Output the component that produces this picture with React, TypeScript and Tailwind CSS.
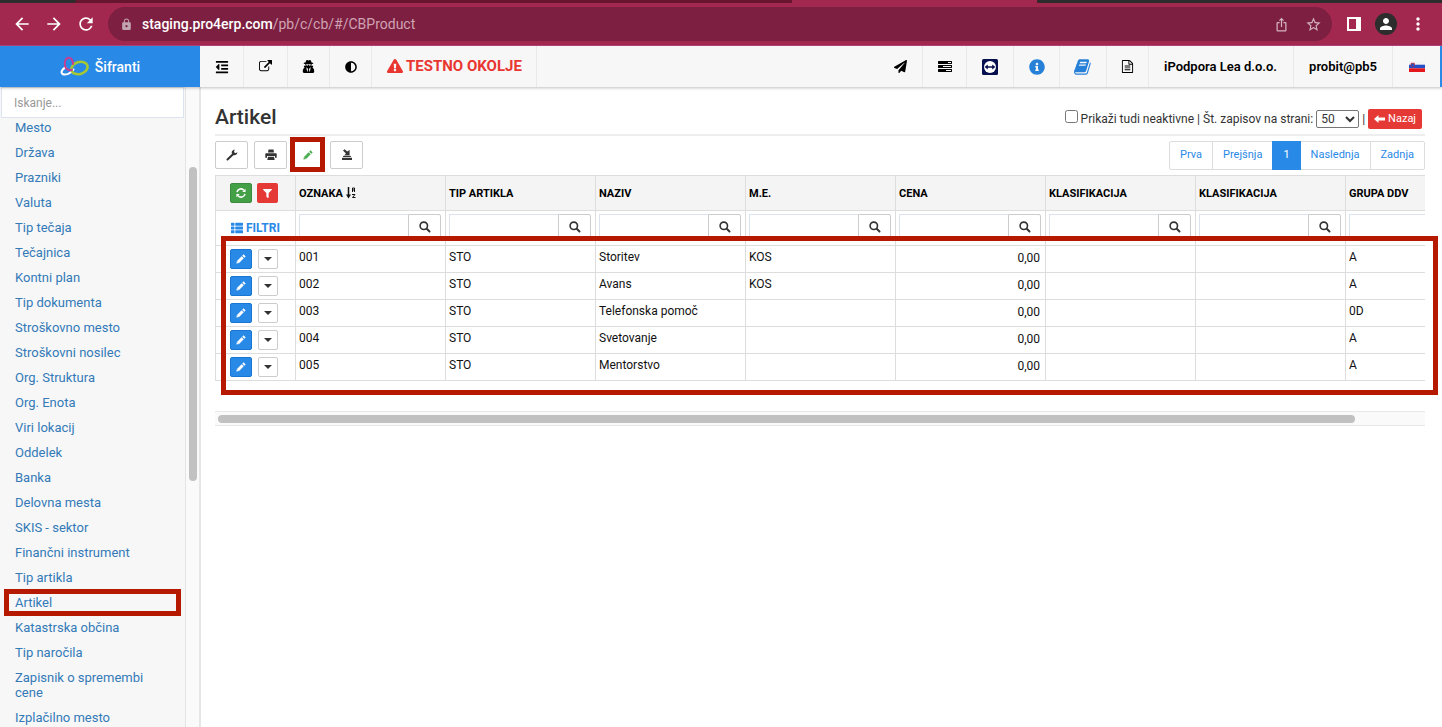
import React from "react";
import {
  FaAdjust,
  FaExclamationTriangle,
  FaFilter,
  FaInfoCircle,
  FaOutdent,
  FaPaperPlane,
  FaThList,
  FaUserSecret,
} from "react-icons/fa";
import { MdArrowBack, MdArrowForward, MdIosShare, MdLock, MdMoreVert, MdPerson, MdRefresh, MdStarOutline } from "react-icons/md";

const MENU = [
  "Mesto", "Država", "Prazniki", "Valuta", "Tip tečaja", "Tečajnica", "Kontni plan", "Tip dokumenta",
  "Stroškovno mesto", "Stroškovni nosilec", "Org. Struktura", "Org. Enota", "Viri lokacij", "Oddelek",
  "Banka", "Delovna mesta", "SKIS - sektor", "Finančni instrument", "Tip artikla", "Artikel",
  "Katastrska občina", "Tip naročila", "Zapisnik o spremembi cene", "Izplačilno mesto",
];

const COLUMNS = ["OZNAKA", "TIP ARTIKLA", "NAZIV", "M.E.", "CENA", "KLASIFIKACIJA", "KLASIFIKACIJA", "GRUPA DDV"];

const ROWS = [
  ["001", "STO", "Storitev", "KOS", "0,00", "", "", "A"],
  ["002", "STO", "Avans", "KOS", "0,00", "", "", "A"],
  ["003", "STO", "Telefonska pomoč", "", "0,00", "", "", "0D"],
  ["004", "STO", "Svetovanje", "", "0,00", "", "", "A"],
  ["005", "STO", "Mentorstvo", "", "0,00", "", "", "A"],
];

const PATHS = {
  external:
    "M1408 928v320q0 119-84.500 203.500t-203.500 84.500h-832q-119 0-203.500-84.500t-84.500-203.500v-832q0-119 84.500-203.500t203.500-84.500h704q14 0 23 9t9 23v64q0 14-9 23t-23 9h-704q-66 0-113 47t-47 113v832q0 66 47 113t113 47h832q66 0 113-47t47-113v-320q0-14 9-23t23-9h64q14 0 23 9t9 23zm384-864v512q0 26-19 45t-45 19-45-19l-176-176-652 652q-10 10-23 10t-23-10l-114-114q-10-10-10-23t10-23l652-652-176-176q-19-19-19-45t19-45 45-19h512q26 0 45 19t19 45z",
  tasks:
    "M1024 1408h640v-128h-640v128zm-384-512h1024v-128h-1024v128zm640-512h384v-128h-384v128zm512 832v256q0 26-19 45t-45 19h-1664q-26 0-45-19t-19-45v-256q0-26 19-45t45-19h1664q26 0 45 19t19 45zm0-512v256q0 26-19 45t-45 19h-1664q-26 0-45-19t-19-45v-256q0-26 19-45t45-19h1664q26 0 45 19t19 45zm0-512v256q0 26-19 45t-45 19h-1664q-26 0-45-19t-19-45v-256q0-26 19-45t45-19h1664q26 0 45 19t19 45z",
  book:
    "M1639 478q40 57 18 129l-275 906q-19 64-76.500 107.500t-122.500 43.500h-923q-77 0-148.500-53.500t-99.500-131.500q-24-67-2-127 0-4 3-27t4-37q1-8-3-21.500t-3-19.500q2-11 8-21t16.500-23.500 16.500-23.500q23-38 45-91.500t30-91.500q3-10 .5-30t-.5-28q3-11 17-28t17-23q21-36 42-92t25-90q1-9-2.500-32t.5-28q4-13 22-30.500t22-22.500q19-26 42.500-84.500t27.500-96.500q1-8-3-25.500t-2-26.500q2-8 9-18t18-23 17-21q8-12 16.500-30.500t15-35 16-36 19.500-32 26.500-23.500 36-11.500 47.500 5.500l-1 3q38-9 51-9h761q74 0 114 56t18 130l-274 906q-36 119-71.500 153.500t-128.500 34.500h-869q-27 0-38 15-11 16-1 43 24 70 144 70h923q29 0 56-15.500t35-41.500l300-987q7-22 5-57 38 15 59 43zm-1064 2q-4 13 2 22.500t20 9.500h608q13 0 25.500-9.500t16.500-22.500l21-64q4-13-2-22.500t-20-9.500h-608q-13 0-25.500 9.500t-16.500 22.500zm-83 256q-4 13 2 22.500t20 9.500h608q13 0 25.500-9.500t16.500-22.500l21-64q4-13-2-22.500t-20-9.500h-608q-13 0-25.500 9.500t-16.500 22.500z",
  file:
    "M1596 380q28 28 48 76t20 88v1152q0 40-28 68t-68 28h-1344q-40 0-68-28t-28-68v-1600q0-40 28-68t68-28h896q40 0 88 20t76 48zm-444-244v376h376q-10-29-22-41l-313-313q-12-12-41-22zm384 1528v-1024h-416q-40 0-68-28t-28-68v-416h-768v1536h1280zm-1024-864q0-14 9-23t23-9h704q14 0 23 9t9 23v64q0 14-9 23t-23 9h-704q-14 0-23-9t-9-23v-64zm736 224q14 0 23 9t9 23v64q0 14-9 23t-23 9h-704q-14 0-23-9t-9-23v-64q0-14 9-23t23-9h704zm0 256q14 0 23 9t9 23v64q0 14-9 23t-23 9h-704q-14 0-23-9t-9-23v-64q0-14 9-23t23-9h704z",
};

function Glyph({ name, size }: { name: keyof typeof PATHS; size: number }) {
  return (
    <svg width={size} height={size} viewBox="0 0 1792 1792" fill="currentColor">
      <path d={PATHS[name]} />
    </svg>
  );
}

function PencilIcon() {
  return (
    <svg width="12" height="12" viewBox="0 0 12 12" fill="none" stroke="currentColor">
      <path d="M3 9l4.700-4.700" strokeWidth="3" />
      <path d="M8.300 3.700l1.300-1.300" strokeWidth="3" strokeLinejoin="round" />
      <path d="M1.400 10.600l.5-2.700 2.200 2.200z" fill="currentColor" stroke="none" />
    </svg>
  );
}

function WrenchIcon() {
  return (
    <svg width="12" height="12" viewBox="0 0 12 12" fill="none" stroke="currentColor" strokeLinecap="round">
      <path d="M1.500 10.500L7 5.200" strokeWidth="2" />
      <path d="M8.700.6C6.800.8 5.400 2.400 5.700 4.200L7.500 6.200C9.400 6.600 11.300 5.300 11.500 3.300L9.300 4.200 8 3z" fill="currentColor" stroke="none" />
    </svg>
  );
}

function PrintIcon() {
  return (
    <svg width="12" height="12" viewBox="0 0 12 12" fill="currentColor">
      <path d="M3.500.5h5l.5 3H3zM1 4.300h10q.700 0 .700.700v3.700H10V7H2v1.700H.3V5q0-.7.700-.7zM3 7.800h6l.7 3.200H2.300z" />
    </svg>
  );
}

function SearchIcon() {
  return (
    <svg width="12" height="12" viewBox="0 0 12 12" fill="none" stroke="#333" strokeLinecap="round">
      <circle cx="4.800" cy="4.800" r="3.700" strokeWidth="1.600" />
      <path d="M8 8l2.500 2.500" strokeWidth="2" />
    </svg>
  );
}

function RefreshIcon() {
  return (
    <svg width="10" height="10" viewBox="0 0 12 12" fill="none" stroke="#fff" strokeWidth="1.800">
      <path d="M1.200 5A4.800 4.800 0 0 1 9.600 2.800M10.800 7A4.800 4.800 0 0 1 2.400 9.200" />
      <path d="M11.500 .8v4h-4zM.5 11.200v-4h4z" fill="#fff" stroke="none" />
    </svg>
  );
}

// arrow dropping into a tray
function SaveIcon() {
  return (
    <svg width="12" height="12" viewBox="0 0 12 12" fill="#333">
      <path d="M1 8.700h10V11H1zM2.600 6.700h6.800l.8 1.300H1.800z" />
      <path d="M2 1.600L3.600.2l2.600 2.300L8.600 1v5.200H3.400l1.500-1.700z" />
    </svg>
  );
}

function SortIcon() {
  return (
    <svg width="10" height="12" viewBox="0 0 10 12" fill="none" stroke="#111">
      <path d="M2.500 0v9" strokeWidth="1.500" />
      <path d="M0 7.500h5L2.500 11.500z" fill="#111" stroke="none" />
      <path d="M6.500 5V1h2v4M6.500 3h2M6 7.500h3L6.500 10.500H9.500" />
    </svg>
  );
}

function Logo() {
  return (
    <svg width="30" height="22" viewBox="0 0 30 22" fill="none" strokeLinecap="round">
      <path d="M5.500 11.500C2 13 .5 16.500 2.500 18 5.500 19.500 11 17.500 13.500 13.500" stroke="#fff" strokeWidth="2" />
      <ellipse cx="19.500" cy="12" rx="8.300" ry="6" transform="rotate(-18 19.500 12)" stroke="#a6c734" strokeWidth="2.600" />
      <path d="M13 8C13 3.500 10.500 1 8 1.800 5 3 4.300 7 5.200 10.500 6 13.500 9 15 12 13.800" stroke="#c93c90" strokeWidth="2" />
    </svg>
  );
}

function RemoteIcon() {
  return (
    <svg width="16" height="16" viewBox="0 0 16 16">
      <rect width="16" height="16" rx="1.500" fill="#07104f" />
      <circle cx="8" cy="8" r="6" fill="#fff" />
      <path d="M2.600 8l3.200-2.400v1.600h4.400V5.600L13.400 8l-3.200 2.400V8.800H5.800v1.600z" fill="#07104f" />
    </svg>
  );
}

function Flag() {
  return (
    <svg width="16" height="11" viewBox="0 0 16 11">
      <path d="M0 0h16v4H0z" fill="#f4f4f4" />
      <path d="M0 3.700h16v3.600H0z" fill="#2550c8" />
      <path d="M0 7.300h16V11H0z" fill="#e4161c" />
      <path d="M2 2.200h3.400v2.600L3.700 6.400 2 4.800z" fill="#2550c8" stroke="#e4161c" strokeWidth=".6" />
    </svg>
  );
}

const navItem = "flex h-full items-center justify-center border-[#e9e9e9] text-black";
const toolBtn = "flex h-7 w-[33px] items-center justify-center rounded-[2px] border border-[#ccc] bg-white";
const pageBtn = "h-full border-r border-[#ddd] px-[10px] text-[#2989e6]";

function BrowserBar() {
  return (
    <div className="relative flex h-[46px] shrink-0 items-center border-b border-[#b4477a] bg-[#a22850] pt-[3px] pl-3 text-white">
      {/* bottom edge of the tab strip */}
      <div className="absolute inset-x-0 top-0 flex h-[3px] bg-[#68162f]">
        <div className="w-[5.300%] rounded-br bg-[#2d2d2d]" />
        <div className="w-[49.600%]" />
        <div className="grow bg-[#a22850]" />
        <div className="w-[28.100%] rounded-bl bg-[#2d2d2d]" />
      </div>
      <button aria-label="Back" className="w-8"><MdArrowBack size={20} /></button>
      <button aria-label="Forward" className="w-8"><MdArrowForward size={20} /></button>
      <button aria-label="Reload" className="w-8"><MdRefresh size={20} /></button>
      <div className="flex h-[34px] grow items-center rounded-full bg-[#7d1f41] pr-2.5 pl-3">
        <MdLock size={13} className="mr-[9px] text-[#c0a4ae]" />
        <p className="grow text-sm leading-5 text-[#cfa3b3]">
          <span className="font-medium text-white">staging.pro4erp.com</span>/pb/c/cb/#/CBProduct
        </p>
        <button aria-label="Share" className="mr-4 text-[#d3b3bf]"><MdIosShare size={15} /></button>
        <button aria-label="Bookmark" className="text-[#d3b3bf]"><MdStarOutline size={17} /></button>
      </div>
      <button aria-label="Side panel" className="ml-[15px] h-3.5 w-3.5 border-2 border-r-[5px] border-white" />
      <button aria-label="Profile" className="ml-3.5 flex h-[22px] w-[22px] items-center justify-center rounded-full bg-[#2d2d2d]">
        <MdPerson size={18} />
      </button>
      <button aria-label="Menu" className="mr-3.5 ml-[11px]"><MdMoreVert size={20} /></button>
    </div>
  );
}

function TopNav() {
  return (
    <header className="relative z-10 flex h-[41px] shrink-0 border-r-2 border-[#2989e6] bg-[#f7f7f7] shadow-[0_1px_3px_rgba(0,0,0,0.25)]">
      <a href="#" className="flex w-[200px] items-center justify-center gap-[5px] bg-[#2989e6] text-sm font-medium text-white">
        <Logo />
        Šifranti
      </a>
      <button aria-label="Toggle menu" className={`${navItem} w-11 border-r`}><FaOutdent size={14} /></button>
      <button aria-label="Open in new window" className={`${navItem} w-11 border-r`}><Glyph name="external" size={13} /></button>
      <button aria-label="User" className={`${navItem} w-[42px] border-r`}><FaUserSecret size={13} /></button>
      <button aria-label="Contrast" className={`${navItem} w-[42px] border-r`}><FaAdjust size={12} /></button>
      <p className="flex h-full items-center gap-[3px] border-r border-[#e9e9e9] pr-3.5 pl-[15px] text-[15px] font-bold text-[#e93631]">
        <FaExclamationTriangle size={16} className="mb-0.5" />
        TESTNO OKOLJE
      </p>
      <div className="grow" />
      <button aria-label="Send" className={`${navItem} w-11`}><FaPaperPlane size={13} /></button>
      <button aria-label="Tasks" className={`${navItem} w-11 border-l`}><Glyph name="tasks" size={14} /></button>
      <button aria-label="Remote help" className={`${navItem} w-[47px] border-l`}><RemoteIcon /></button>
      <button aria-label="Info" className={`${navItem} w-[46px] border-l`}><FaInfoCircle size={16} className="text-[#2780d8]" /></button>
      <button aria-label="Manual" className={`${navItem} w-[47px] border-l`}><span className="text-[#2780d8]"><Glyph name="book" size={18} /></span></button>
      <button aria-label="Document" className={`${navItem} w-[42px] border-l`}><Glyph name="file" size={13} /></button>
      <button className={`${navItem} border-l pr-4 pl-[15px] text-[13px] font-semibold`}>iPodpora Lea d.o.o.</button>
      <button className={`${navItem} border-l px-[15px] text-[13px] font-semibold`}>probit@pb5</button>
      <button aria-label="Language" className={`${navItem} w-12 border-l`}><Flag /></button>
    </header>
  );
}

function Sidebar() {
  return (
    <aside className="relative flex w-[201px] shrink-0 border-r-2 border-[#e6e6e6] bg-[#fafafa]">
      <nav className="w-[186px] overflow-hidden border-r border-[#e4e4e4] bg-[#f7f7f7]">
        <input
          type="text"
          aria-label="Iskanje"
          placeholder="Iskanje..."
          className="ml-px block h-[31px] w-[183px] border border-[#dbe4ee] bg-white px-3 text-xs text-[#555] placeholder:text-[#999]"
        />
        <ul className="-mt-[3px] text-[13px] leading-[15px] text-[#337ab7]">
          {MENU.map((item) => (
            <li key={item} className="relative">
              <a href="#" className="block py-[5px] pr-8 pl-[15px]">{item}</a>
              {item === "Artikel" && <div className="absolute -inset-y-px right-1 left-1 border-[5px] border-[#b51a00]" />}
            </li>
          ))}
        </ul>
      </nav>
      <div className="mt-20 ml-[3px] h-[314px] w-2 rounded-full bg-[#c1c1c1]" />
    </aside>
  );
}

function ProductTable() {
  return (
    <div className="relative mt-1.5">
      <div className="overflow-hidden">
        <table className="w-[1281px] table-fixed border-collapse text-xs text-[#111] [&_td]:border [&_td]:border-[#ddd] [&_th]:border [&_th]:border-[#ddd]">
          <colgroup>
            <col className="w-20" />
            {COLUMNS.map((_, i) => <col key={i} className="w-[150px]" />)}
          </colgroup>
          <thead>
            <tr className="h-[35px] bg-[#f4f4f4]">
              <th>
                <div className="flex gap-[5px] pl-3.5">
                  <button aria-label="Osveži" className="flex h-5 w-[22px] items-center justify-center rounded-[2px] border border-[#3d8b40] bg-[#43a047]"><RefreshIcon /></button>
                  <button aria-label="Počisti filtre" className="flex h-5 w-[21px] items-center justify-center rounded-[2px] bg-[#e53935] text-white"><FaFilter size={9} /></button>
                </div>
              </th>
              {COLUMNS.map((col, i) => (
                <th key={i} className="px-[3px] pt-0.5 text-left text-[11px] font-bold text-black">
                  <span className="flex items-center gap-[3px]">{col}{i === 0 && <span className="pb-0.5"><SortIcon /></span>}</span>
                </th>
              ))}
            </tr>
            <tr className="h-[35px]">
              <td>
                <button className="flex items-center gap-[3px] pl-[15px] text-xs font-bold text-[#2989e6]"><FaThList size={12} />FILTRI</button>
              </td>
              {COLUMNS.map((col, i) => (
                <td key={i} className="px-[3px] pb-0.5">
                  <div className="flex h-[27px] w-[142px]">
                    <input type="text" aria-label={`Filter ${col}`} className="h-full min-w-0 grow border border-r-0 border-[#dbe4ee] bg-white px-1" />
                    <button aria-label={`Išči ${col}`} className="flex h-full w-[33px] shrink-0 items-center justify-center rounded-r-[2px] border border-[#ccc] bg-white"><SearchIcon /></button>
                  </div>
                </td>
              ))}
            </tr>
          </thead>
          <tbody>
            {ROWS.map((row) => (
              <tr key={row[0]} className="h-[27px]">
                <td>
                  <div className="flex gap-1.5 pl-3.5">
                    <button aria-label={`Uredi ${row[0]}`} className="flex h-5 w-[22px] items-center justify-center rounded-[2px] border border-[#1976d2] bg-[#2989e6] text-white"><PencilIcon /></button>
                    <button aria-label={`Možnosti ${row[0]}`} className="flex h-5 w-5 items-center justify-center rounded-[2px] border border-[#ccc] bg-white">
                      <svg width="8" height="4" viewBox="0 0 8 4" fill="#333"><path d="M0 0h8L4 4z" /></svg>
                    </button>
                  </div>
                </td>
                {row.map((cell, i) => (
                  <td key={i} className={i === 4 ? "px-[5px] pb-0.5 text-right" : "px-[3px] pb-1"}>{cell}</td>
                ))}
              </tr>
            ))}
          </tbody>
        </table>
      </div>
      <div className="pointer-events-none absolute top-[61px] -right-[13px] -bottom-[14px] left-1.5 border-[5px] border-[#b51a00]" />
    </div>
  );
}

export default function App() {
  return (
    <div className="flex h-screen flex-col overflow-hidden bg-white font-[Roboto,sans-serif] text-[#333]">
      <BrowserBar />
      <TopNav />
      <div className="flex min-h-0 grow">
        <Sidebar />
        <main className="min-w-0 grow pt-4 pr-[17px] pl-3.5">
          <div className="flex h-[33px] items-center justify-between border-b-2 border-[#eee]">
            <h1 className="pb-0.5 text-[21px] font-medium">Artikel</h1>
            <div className="flex items-center gap-[3px] text-xs">
              <input id="inactive" type="checkbox" className="mb-1 h-[13px] w-[13px]" />
              <label htmlFor="inactive">Prikaži tudi neaktivne</label>
              <span>|</span>
              <label htmlFor="perpage">Št. zapisov na strani:</label>
              <select id="perpage" className="h-[18px] w-[43px] rounded-[2px] border border-[#767676] bg-white text-xs">
                <option>50</option>
              </select>
              <span>|</span>
              <button className="mr-[3px] flex h-5 items-center gap-[3px] rounded-[2px] bg-[#e53935] px-1.5 pt-px text-[11px] text-white">
                <svg width="11" height="8" viewBox="0 0 11 8" fill="#fff"><path d="M4.500 0v2.600H11v2.800H4.500V8L0 4z" /></svg>
                Nazaj
              </button>
            </div>
          </div>
          <div className="mt-[5px] flex h-7 items-start justify-between">
            <div className="flex gap-1">
              <button aria-label="Nastavitve" className={`${toolBtn} mr-0.5`}><WrenchIcon /></button>
              <button aria-label="Natisni" className={toolBtn}><PrintIcon /></button>
              <div className="relative mr-0.5">
                <button aria-label="Uredi" className={`${toolBtn} text-[#4cae50]`}><PencilIcon /></button>
                <div className="pointer-events-none absolute -inset-x-px -top-1 -bottom-[3px] border-[5px] border-[#b51a00]" />
              </div>
              <button aria-label="Izvozi" className={toolBtn}><SaveIcon /></button>
            </div>
            <div className="flex h-[29px] rounded-[2px] border border-[#ddd] text-[11px]">
              <button className={pageBtn}>Prva</button>
              <button className="h-full px-[10px] text-[#2989e6]">Prejšnja</button>
              <button className="-my-px bg-[#2989e6] px-[11px] text-white">1</button>
              <button className={pageBtn}>Naslednja</button>
              <button className="h-full px-[10px] text-[#2989e6]">Zadnja</button>
            </div>
          </div>
          <ProductTable />
          <div className="mt-[30px] flex h-[15px] items-center border-y border-[#e8e8e8] bg-[#fafafa] px-[3px]">
            <div className="h-2 w-[94.400%] rounded-full bg-[#c1c1c1]" />
          </div>
        </main>
      </div>
    </div>
  );
}
